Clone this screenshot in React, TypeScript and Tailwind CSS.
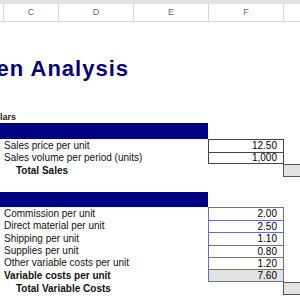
const cols = [
  { key: 'B', w: 'w-[3px]', label: '' },
  { key: 'C', w: 'w-[55px]', label: 'C' },
  { key: 'D', w: 'w-[75px]', label: 'D' },
  { key: 'E', w: 'w-[75px]', label: 'E' },
  { key: 'F', w: 'w-[75px]', label: 'F' },
  { key: 'G', w: 'flex-1', label: '' },
];

const salesRows = [
  { label: 'Sales price per unit', value: '12.50', h: 'h-[13px]' },
  { label: 'Sales volume per period (units)', value: '1,000', h: 'h-[12px]' },
];

const costRows = [
  { label: 'Commission per unit', value: '2.00', h: 'h-[13px]' },
  { label: 'Direct material per unit', value: '2.50', h: 'h-[12px]' },
  { label: 'Shipping per unit', value: '1.10', h: 'h-[13px]' },
  { label: 'Supplies per unit', value: '0.80', h: 'h-[12px]' },
  { label: 'Other variable costs per unit', value: '1.20', h: 'h-[12px]' },
];

function ColumnHeader() {
  return (
    <div className="flex h-[22px] flex-col">
      <div className="h-[4px] bg-[#e4e4e4]" />
      <div className="flex h-[18px] border-b border-[#d6d6d6] bg-white">
        {cols.map((c, i) => (
          <div
            key={c.key}
            className={`${c.w} flex items-center justify-center text-[9px] text-[#6b6b6b] ${
              i > 0 ? 'border-l border-[#d6d6d6]' : ''
            }`}
          >
            {c.label}
          </div>
        ))}
      </div>
    </div>
  );
}

function NavyBar({ h }: { h: string }) {
  return <div className={`${h} w-[208px] bg-[#000080]`} />;
}

function ValueRow({
  label,
  value,
  h,
  border,
  last,
  bold,
  shaded,
}: {
  label: string;
  value: string;
  h: string;
  border: string;
  last?: boolean;
  bold?: boolean;
  shaded?: boolean;
}) {
  return (
    <div className={`flex ${h}`}>
      <div
        className={`flex w-[208px] items-center pl-[4px] text-[10px] leading-none text-[#111] ${
          bold ? 'font-bold' : ''
        }`}
      >
        {label}
      </div>
      <div
        className={`flex w-[76px] items-center justify-end border-x border-t pr-[6px] text-[10px] leading-none text-black ${border} ${
          last ? 'border-b' : ''
        } ${shaded ? 'bg-[#e3e3e3]' : 'bg-white'}`}
      >
        {value}
      </div>
    </div>
  );
}

function TotalRow({ label, h }: { label: string; h: string }) {
  return (
    <div className={`flex ${h}`}>
      <div className="flex w-[283px] items-center pl-[16px] text-[10px] font-bold leading-none text-[#111]">
        {label}
      </div>
      <div className="flex-1 border-b border-l border-t border-[#555] bg-[#e3e3e3]" />
    </div>
  );
}

export default function App() {
  return (
    <div
      className="relative h-[300px] w-[300px] overflow-hidden bg-white"
      style={{ fontFamily: '"Liberation Sans", Arial, sans-serif' }}
    >
      <ColumnHeader />
      <div className="h-[32px]" />
      <div className="flex h-[30px] w-[129px] justify-end">
        <span className="whitespace-nowrap text-[22px] font-bold leading-[30px] tracking-[1px] text-[#000080]">
          Break-even Analysis
        </span>
      </div>
      <div className="h-[27px]" />
      <div className="flex h-[12px] w-[16px] justify-end">
        <span className="whitespace-nowrap text-[9px] font-bold leading-[12px] text-[#222]">
          In Dollars
        </span>
      </div>
      <NavyBar h="h-[16px]" />
      {salesRows.map((r, i) => (
        <ValueRow
          key={r.label}
          {...r}
          border="border-[#444]"
          last={i === salesRows.length - 1}
        />
      ))}
      <TotalRow label="Total Sales" h="h-[13px]" />
      <div className="h-[15px]" />
      <NavyBar h="h-[15px]" />
      {costRows.map((r) => (
        <ValueRow key={r.label} {...r} border="border-[#6a6acc]" />
      ))}
      <ValueRow
        label="Variable costs per unit"
        value="7.60"
        h="h-[13px]"
        border="border-[#6a6acc]"
        last
        bold
        shaded
      />
      <TotalRow label="Total Variable Costs" h="h-[13px]" />
    </div>
  );
}
